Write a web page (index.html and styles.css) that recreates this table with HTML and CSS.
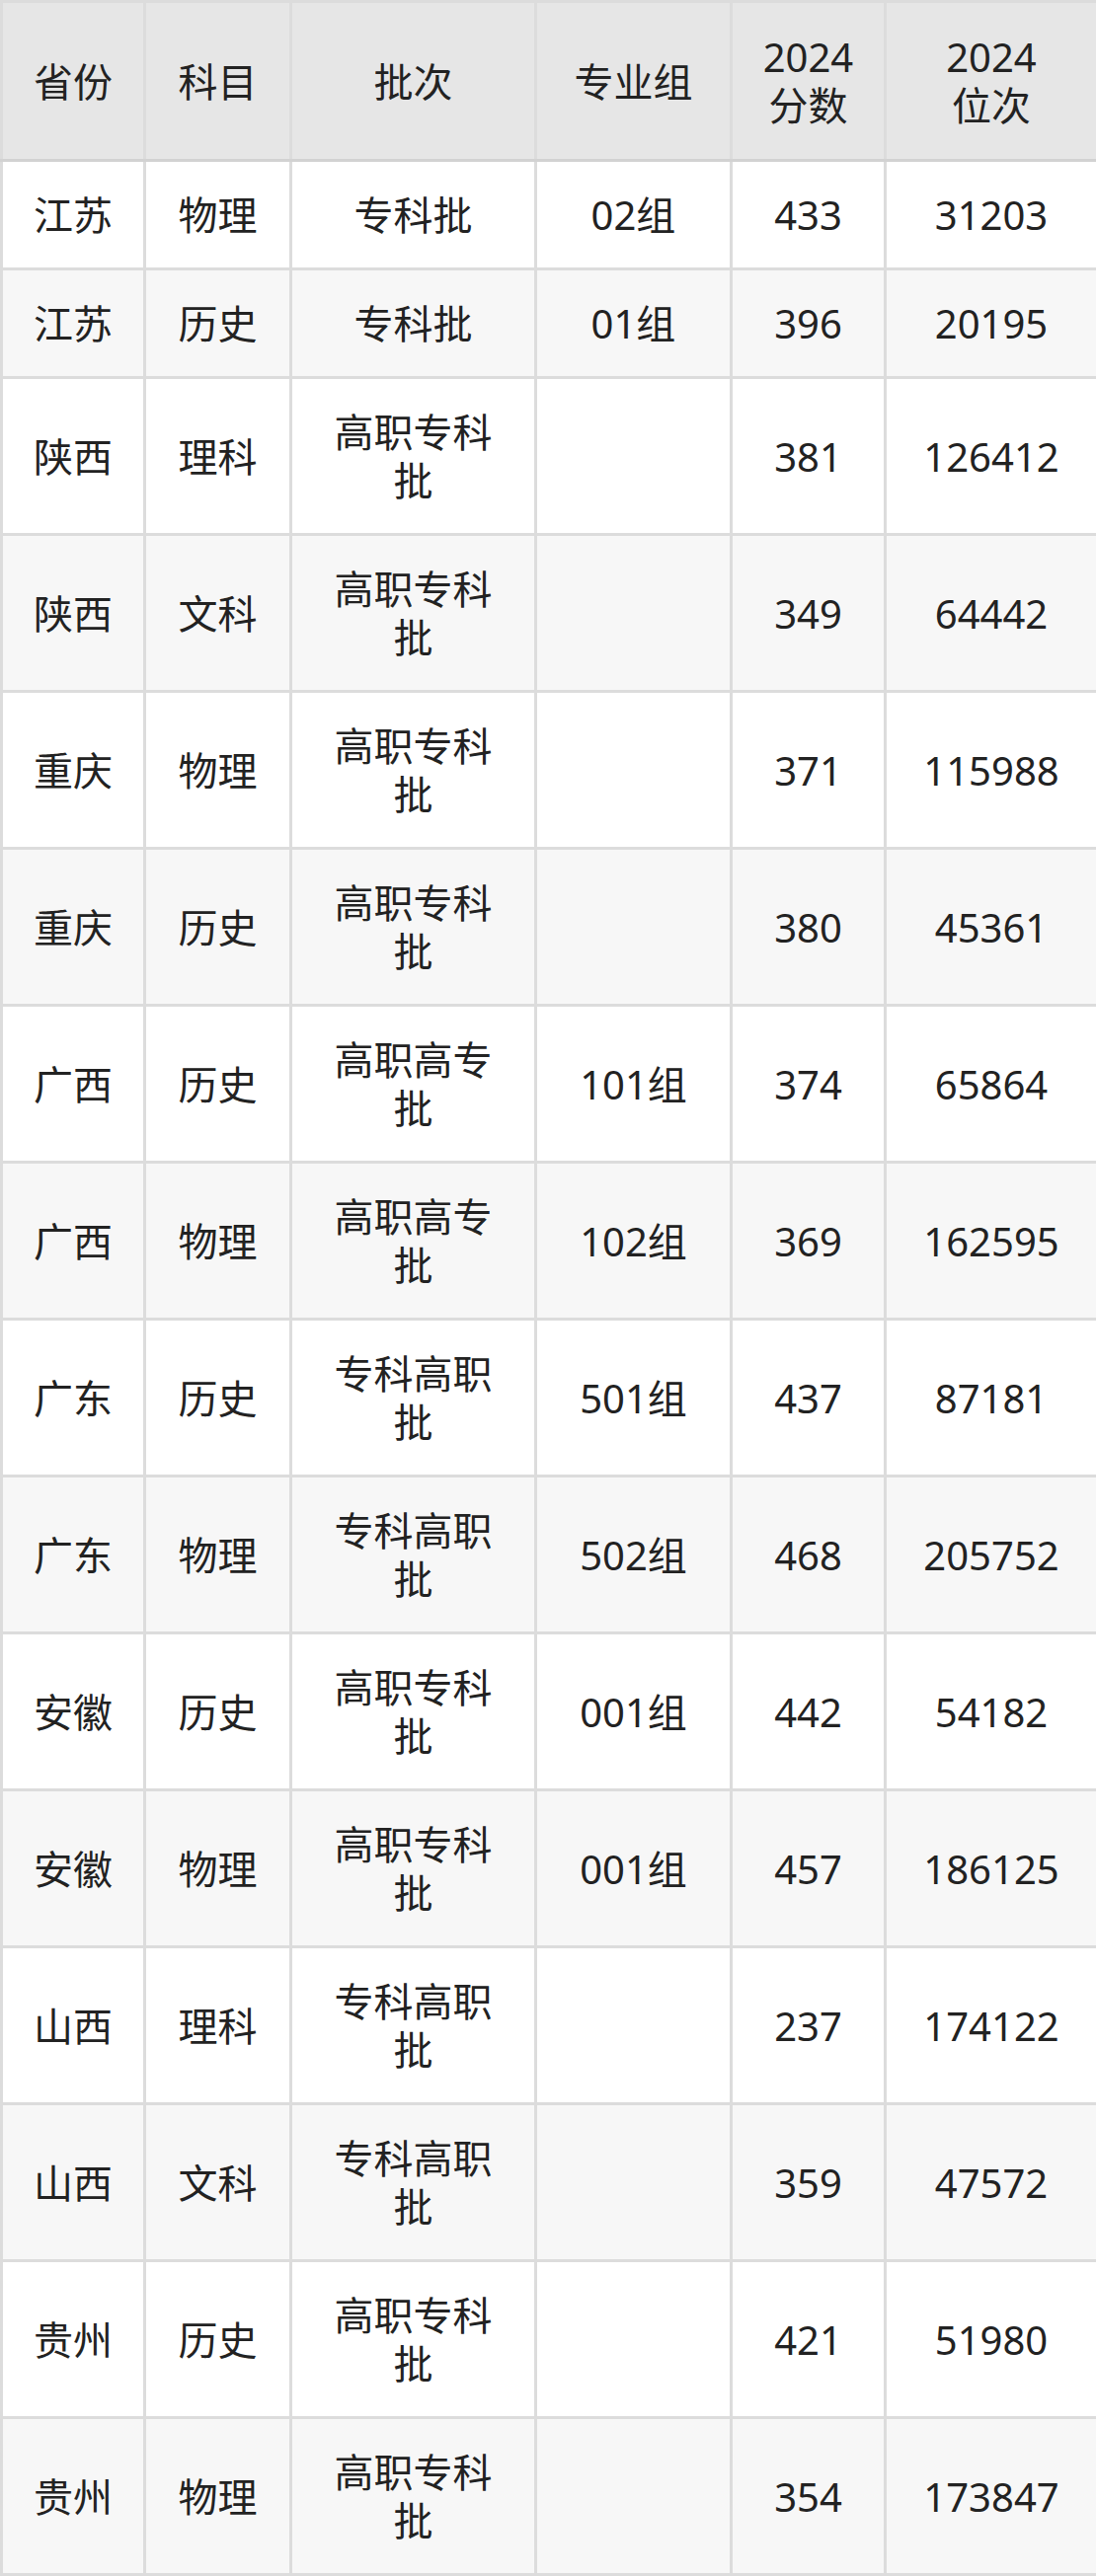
FILE: index.html
```html
<!DOCTYPE html>
<html lang="zh-CN">
<head>
<meta charset="utf-8">
<link rel="stylesheet" href="styles.css">
</head>
<body>
<table class="score-table">
  <colgroup>
    <col class="c1"><col class="c2"><col class="c3"><col class="c4"><col class="c5"><col class="c6">
  </colgroup>
  <thead>
    <tr><th>省份</th><th>科目</th><th>批次</th><th>专业组</th><th>2024<br>分数</th><th>2024<br>位次</th></tr>
  </thead>
  <tbody>
    <tr><td>江苏</td><td>物理</td><td>专科批</td><td>02组</td><td>433</td><td>31203</td></tr>
    <tr><td>江苏</td><td>历史</td><td>专科批</td><td>01组</td><td>396</td><td>20195</td></tr>
    <tr><td>陕西</td><td>理科</td><td>高职专科批</td><td></td><td>381</td><td>126412</td></tr>
    <tr><td>陕西</td><td>文科</td><td>高职专科批</td><td></td><td>349</td><td>64442</td></tr>
    <tr><td>重庆</td><td>物理</td><td>高职专科批</td><td></td><td>371</td><td>115988</td></tr>
    <tr><td>重庆</td><td>历史</td><td>高职专科批</td><td></td><td>380</td><td>45361</td></tr>
    <tr><td>广西</td><td>历史</td><td>高职高专批</td><td>101组</td><td>374</td><td>65864</td></tr>
    <tr><td>广西</td><td>物理</td><td>高职高专批</td><td>102组</td><td>369</td><td>162595</td></tr>
    <tr><td>广东</td><td>历史</td><td>专科高职批</td><td>501组</td><td>437</td><td>87181</td></tr>
    <tr><td>广东</td><td>物理</td><td>专科高职批</td><td>502组</td><td>468</td><td>205752</td></tr>
    <tr><td>安徽</td><td>历史</td><td>高职专科批</td><td>001组</td><td>442</td><td>54182</td></tr>
    <tr><td>安徽</td><td>物理</td><td>高职专科批</td><td>001组</td><td>457</td><td>186125</td></tr>
    <tr><td>山西</td><td>理科</td><td>专科高职批</td><td></td><td>237</td><td>174122</td></tr>
    <tr><td>山西</td><td>文科</td><td>专科高职批</td><td></td><td>359</td><td>47572</td></tr>
    <tr><td>贵州</td><td>历史</td><td>高职专科批</td><td></td><td>421</td><td>51980</td></tr>
    <tr><td>贵州</td><td>物理</td><td>高职专科批</td><td></td><td>354</td><td>173847</td></tr>
  </tbody>
</table>
</body>
</html>
```
FILE: styles.css
```css
html, body {
  margin: 0;
  padding: 0;
  background: #ffffff;
}
.score-table {
  width: 1110px;
  border-collapse: collapse;
  table-layout: fixed;
  font-family: "Noto Sans", "Noto Sans CJK SC", sans-serif;
  font-size: 40px;
  line-height: 49px;
  color: #222222;
}
.c1 { width: 145px; }
.c2 { width: 148px; }
.c3 { width: 248px; }
.c4 { width: 198px; }
.c5 { width: 156px; }
.c6 { width: 215px; }
.score-table th,
.score-table td {
  border: 3px solid #dcdcdc;
  padding: 29px 30px;
  text-align: center;
  vertical-align: middle;
  font-weight: normal;
}
.score-table th {
  background: #e6e6e6;
  padding: 30px 8px;
}
.score-table thead th {
  border-bottom-color: #d2d2d2;
}
.score-table tbody tr:nth-child(odd) td {
  background: #ffffff;
}
.score-table tbody tr:nth-child(even) td {
  background: #f7f7f7;
}
```
